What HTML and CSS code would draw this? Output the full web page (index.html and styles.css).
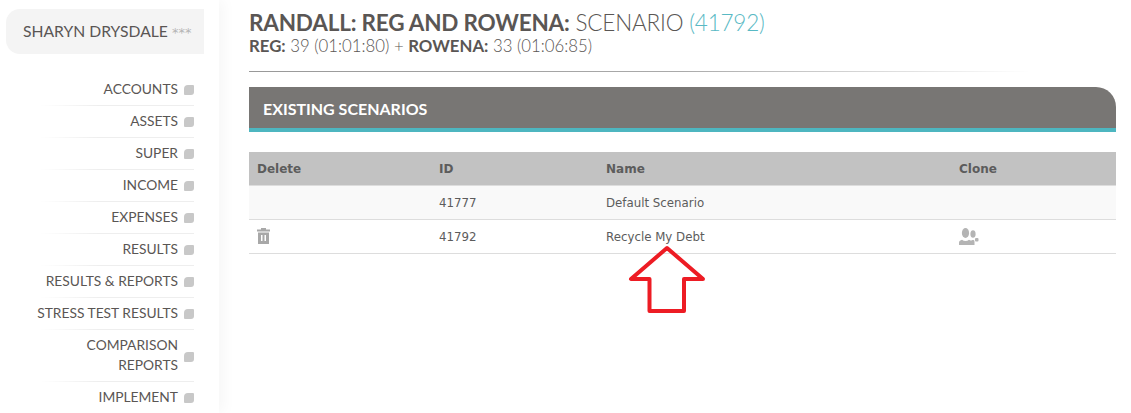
FILE: index.html
```html
<!DOCTYPE html>
<html>
<head>
    <meta charset="UTF-8">
    <title>Existing Scenarios</title>
    <link rel="stylesheet" href="styles.css">
</head>
<body>
    <div class="page">
        <aside class="sidebar">
            <div class="client-name">SHARYN DRYSDALE <span class="stars">***</span></div>
            <ul class="side-menu">
                <li><span>ACCOUNTS</span><i class="bullet"></i></li>
                <li><span>ASSETS</span><i class="bullet"></i></li>
                <li><span>SUPER</span><i class="bullet"></i></li>
                <li><span>INCOME</span><i class="bullet"></i></li>
                <li><span>EXPENSES</span><i class="bullet"></i></li>
                <li><span>RESULTS</span><i class="bullet"></i></li>
                <li><span>RESULTS &amp; REPORTS</span><i class="bullet"></i></li>
                <li><span>STRESS TEST RESULTS</span><i class="bullet"></i></li>
                <li class="two-line"><span>COMPARISON<br>REPORTS</span><i class="bullet"></i></li>
                <li><span>IMPLEMENT</span><i class="bullet"></i></li>
            </ul>
        </aside>

        <main class="content">
            <h1 class="page-title"><b>RANDALL: REG AND ROWENA:</b> SCENARIO <span class="scenario-id">(41792)</span></h1>
            <p class="page-sub"><b>REG:</b> 39 (01:01:80) + <b>ROWENA:</b> 33 (01:06:85)</p>
            <div class="rule"></div>

            <h2 class="panel-title">EXISTING SCENARIOS</h2>

            <table class="scenario-table">
                <thead>
                    <tr>
                        <th class="col-delete">Delete</th>
                        <th class="col-id">ID</th>
                        <th class="col-name">Name</th>
                        <th>Clone</th>
                    </tr>
                </thead>
                <tbody>
                    <tr class="alt">
                        <td></td>
                        <td>41777</td>
                        <td>Default Scenario</td>
                        <td></td>
                    </tr>
                    <tr>
                        <td>
                            <svg class="icon icon-trash" width="13" height="16" viewBox="0 0 13 16">
                                <path fill="#a8a8a8" fill-rule="evenodd" d="M4 0h5v1.500h4V3.500H0V1.500h4zM1 4.500h11V16H1zM4 7v6h1.500V7zM7.500 7v6H9V7z"/>
                            </svg>
                        </td>
                        <td>41792</td>
                        <td>Recycle My Debt</td>
                        <td>
                            <svg class="icon" width="20" height="17" viewBox="0 0 20 17">
                                <ellipse cx="6.500" cy="5" rx="3.600" ry="5" fill="#b4b4b4"/>
                                <ellipse cx="14" cy="6" rx="2.600" ry="3.800" fill="#b4b4b4"/>
                                <path fill="#b4b4b4" d="M0 17v-2.500c0-1.500 1.500-2.300 3-2.800 2 1.600 5 1.600 7 0l1.500.7c1 .5 1.500-.5 2.500-.5 1 0 1.500.6 1.500 2v3z"/>
                                <rect x="16" y="10" width="3.500" height="3.500" rx="1" fill="#b4b4b4"/>
                            </svg>
                        </td>
                    </tr>
                </tbody>
            </table>
        </main>

        <svg class="red-arrow" width="84" height="74" viewBox="0 0 84 74">
            <path fill="none" stroke="#ed1c24" stroke-width="4" stroke-linejoin="round" d="M41 4 L5 35 H23.500 V67 H58 V35 H77 Z"/>
        </svg>
    </div>
</body>
</html>
```

FILE: styles.css
```css
/* Page layout */
html, body {
    margin: 0;
    padding: 0;
    background: #fff;
    overflow: hidden;
}

.page {
    position: relative;
    display: flex;
    height: 413px;
    font-family: "Lato", "Liberation Sans", sans-serif;
    color: #5a5654;
}

/* Sidebar */
.sidebar {
    width: 219px;
    flex-shrink: 0;
    padding-top: 9px;
    box-sizing: border-box;
    box-shadow: 4px 0 14px rgba(0,0,0,0.04);
}

.client-name {
    width: 198px;
    height: 45px;
    margin-left: 6px;
    box-sizing: border-box;
    padding-left: 17px;
    line-height: 45px;
    font-size: 15.700px;
    background: #f4f4f4;
    border-radius: 14px 0 0 14px;
    white-space: nowrap;
}

.stars {
    font-family: "DejaVu Sans", sans-serif;
    font-size: 13px;
    color: #b5b5b5;
}

.side-menu {
    list-style: none;
    margin: 20px 25px 0 20px;
    padding: 0;
}

.side-menu li {
    display: flex;
    justify-content: flex-end;
    align-items: center;
    height: 29px;
    padding-bottom: 2px;
    border-bottom: 1px solid;
    border-image: linear-gradient(to right, transparent 12%, #eee 45%) 1;
    font-size: 13.800px;
    text-align: right;
    white-space: nowrap;
}

.side-menu li.two-line {
    height: 50px;
    padding-bottom: 1px;
    line-height: 20px;
}

.side-menu li:last-child {
    border-bottom: none;
}

.bullet {
    flex-shrink: 0;
    width: 10px;
    height: 10px;
    margin-left: 6px;
    margin-top: 3px;
    background: #c8c8c8;
    border-radius: 4px 1px 3px 1px;
}

/* Main content */
.content {
    flex: 1;
    min-width: 0;
    padding: 9px 15px 0 30px;
}

.page-title {
    margin: 0;
    font-size: 22.500px;
    letter-spacing: -0.2px;
    line-height: 27px;
    font-weight: 300;
}

.page-title b {
    font-weight: bold;
}

.scenario-id {
    color: #58b9c4;
}

.page-sub {
    margin: 0;
    font-size: 16.800px;
    line-height: 20px;
    font-weight: 300;
}

.page-sub b {
    font-weight: bold;
}

.rule {
    height: 1px;
    margin-top: 15px;
    background: linear-gradient(to right, #999 0%, #aaa 50%, #fff 90%);
}

.panel-title {
    margin: 15px 0 20px;
    height: 41px;
    padding-left: 14px;
    line-height: 44px;
    font-size: 16px;
    font-weight: bold;
    color: #fff;
    background: #787674;
    border-bottom: 4px solid #4db6c0;
    border-radius: 0 20px 0 0;
}

/* Scenario table */
.scenario-table {
    width: 100%;
    border-collapse: collapse;
    font-family: "DejaVu Sans", Verdana, sans-serif;
    font-size: 11.800px;
    color: #5c5c5c;
}

.scenario-table th {
    height: 33px;
    padding: 0 8px;
    text-align: left;
    font-size: 12px;
    background: #c2c2c2;
    border-bottom: 1px solid #ddd;
}

.scenario-table td {
    height: 33px;
    padding: 0 8px;
    border-bottom: 1px solid #ddd;
}

.scenario-table .alt td {
    background: #f9f9f9;
}

.col-delete {
    width: 166px;
}

.col-id {
    width: 151px;
}

.col-name {
    width: 337px;
}

.icon {
    display: block;
}

.icon-trash {
    margin-bottom: 1px;
}

/* Red annotation arrow */
.red-arrow {
    position: absolute;
    left: 626px;
    top: 244px;
}
```
